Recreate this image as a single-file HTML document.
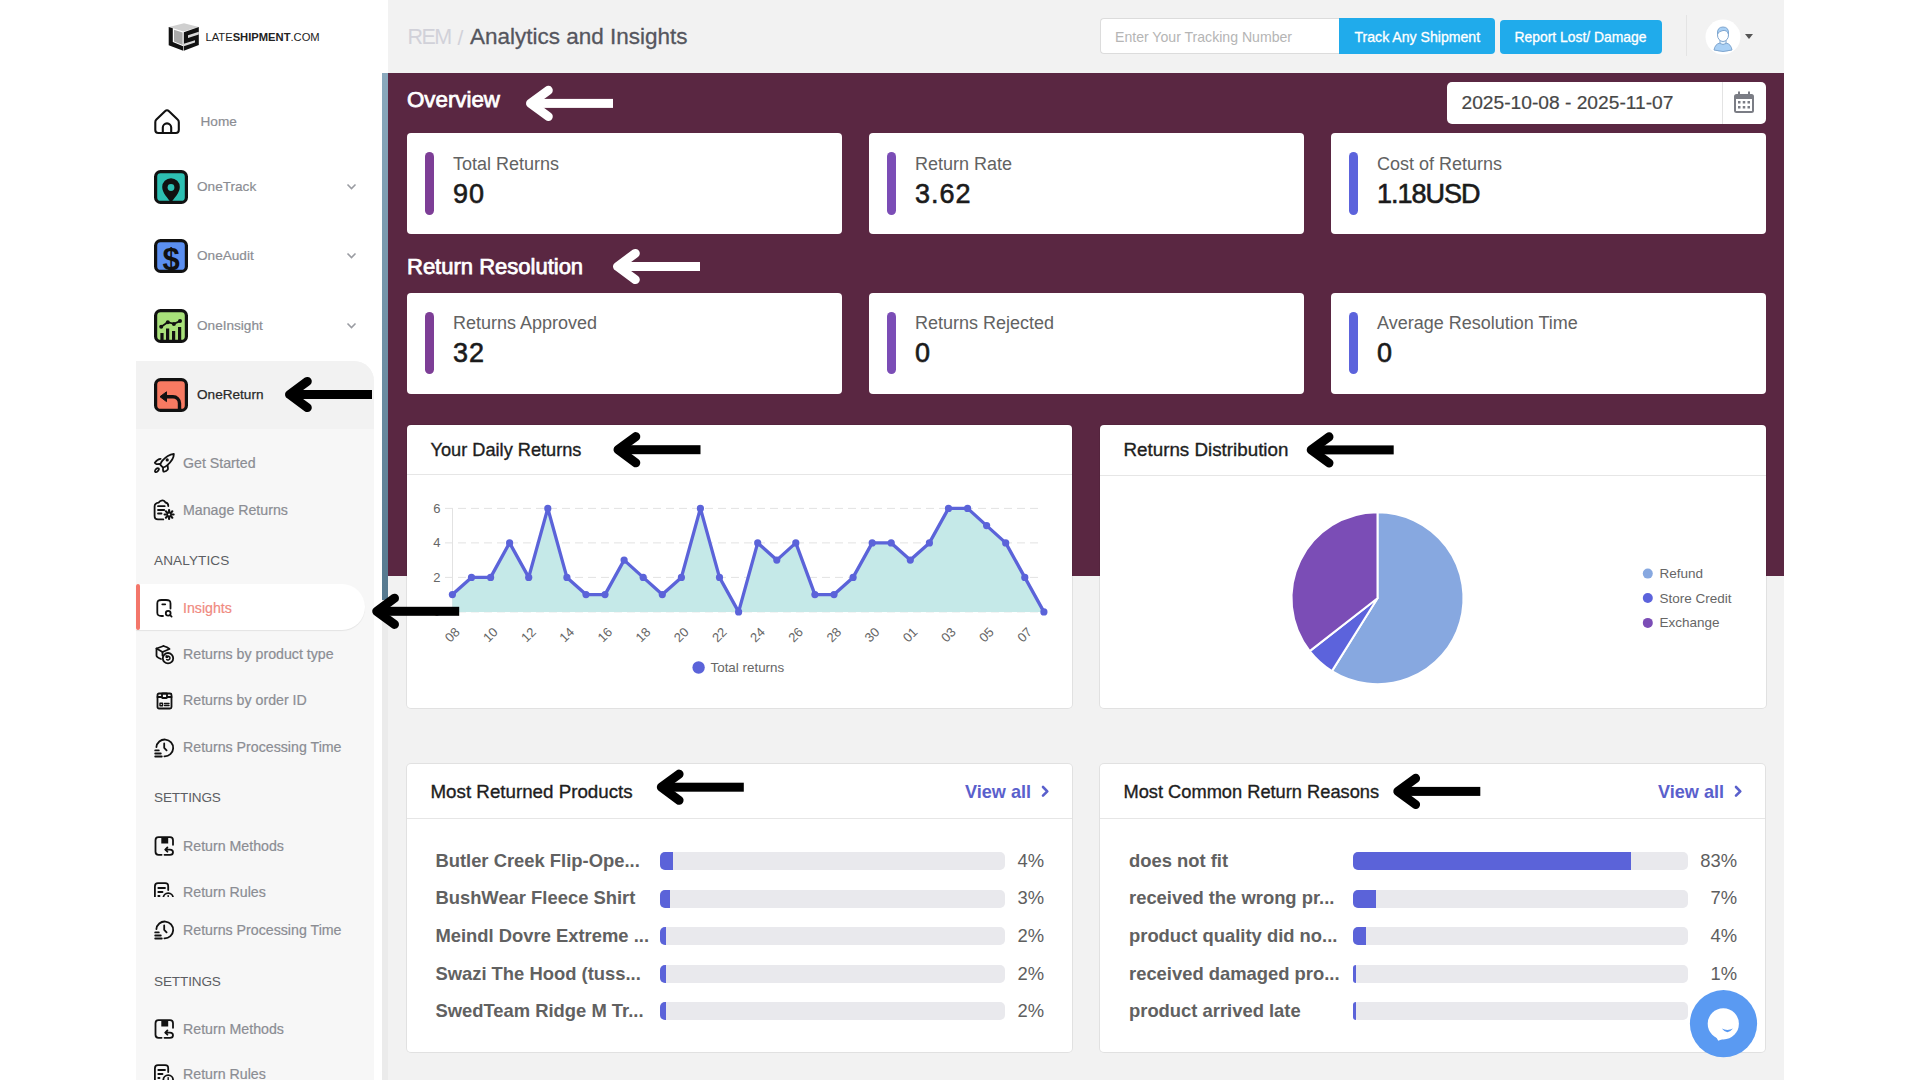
<!DOCTYPE html>
<html><head><meta charset="utf-8"><title>Analytics and Insights</title>
<style>
html,body{margin:0;padding:0;width:1920px;height:1080px;overflow:hidden;background:#fff;}
body{position:relative;font-family:"Liberation Sans",sans-serif;}
.r{position:absolute;}
.t{position:absolute;white-space:nowrap;line-height:1;}
svg text{font-family:"Liberation Sans",sans-serif;}
</style></head><body>
<div class="r" style="left:0px;top:0px;width:1920px;height:1080px;background:#ffffff;"></div><div class="r" style="left:388px;top:0px;width:1396px;height:73px;background:#f2f2f2;"></div><div class="r" style="left:388px;top:73px;width:1396px;height:503px;background:#5a2742;"></div><div class="r" style="left:388px;top:576px;width:1396px;height:504px;background:#f2f2f2;"></div><div class="r" style="left:382px;top:73px;width:6px;height:527px;background:linear-gradient(#8aa9bd,#56798f);"></div><div class="r" style="left:382px;top:600px;width:6px;height:480px;background:#ebebeb;"></div><div class="r" style="left:136px;top:361px;width:238px;height:719px;background:#f7f7f7;border-top-right-radius:20px;"></div><div class="r" style="left:136px;top:361px;width:238px;height:68px;background:#f2f2f2;border-top-right-radius:20px;"></div><svg class="r" style="left:164px;top:19px" width="40" height="36" viewBox="0 0 40 36">
<polygon points="5,8 20,4.2 34.8,8 19.4,12.6" fill="#cfcfcf"/>
<polygon points="4.7,8 8.8,9.3 8.8,23 19.2,27.2 19.2,31.8 4.7,26.2" fill="#111"/>
<polygon points="10,10.8 18.6,13.4 18.6,26 10,22.6" fill="#a9a9a9"/>
<polygon points="19.8,13.2 34.8,8 34.8,26 19.8,31.8" fill="#111"/>
<polygon points="24,16.2 34.8,12.8 34.8,15.6 24,19" fill="#d9d9d9"/>
<polygon points="19.8,24.8 31,21.2 31,23.6 19.8,27.2" fill="#d9d9d9"/>
</svg><div class="t" style="left:205.5px;top:32.02px;font-size:11.2px;color:#222;font-weight:400;letter-spacing:0px;">LATE<b>SHIPMENT</b>.COM</div><svg class="r" style="left:153px;top:108px" width="28" height="28" viewBox="0 0 28 28">
<path d="M2.3,14.2 Q2.3,12.7 3.4,11.6 L12,3.2 Q14,1.3 16,3.2 L24.6,11.6 Q25.8,12.7 25.8,14.2 V22 Q25.8,25 22.8,25 H5.3 Q2.3,25 2.3,22 Z" fill="none" stroke="#111" stroke-width="2.1" stroke-linejoin="round"/>
<path d="M9.8,25 V19.6 A4.2,4.2 0 0 1 18.2,19.6 V25" fill="none" stroke="#111" stroke-width="2.1"/>
</svg><div class="t" style="left:200.5px;top:115.49px;font-size:13.6px;color:#8b8d93;font-weight:400;-webkit-text-stroke:0.2px #8b8d93;">Home</div><svg class="r" style="left:154px;top:170px" width="34" height="34" viewBox="0 0 34 34"><rect x="1.6" y="1.6" width="30.8" height="30.8" rx="5" fill="#2dbfb2" stroke="#111" stroke-width="3.2"/><path d="M17,33 C14,28 8.2,23 8.2,17 A8.8,8.8 0 0 1 25.8,17 C25.8,23 20,28 17,33 Z" fill="#111"/><circle cx="17" cy="17.5" r="3.4" fill="#2dbfb2"/></svg><div class="t" style="left:197px;top:180.49px;font-size:13.6px;color:#8b8d93;font-weight:400;-webkit-text-stroke:0.2px #8b8d93;">OneTrack</div><svg class="r" style="left:154px;top:239px" width="34" height="34" viewBox="0 0 34 34"><rect x="1.6" y="1.6" width="30.8" height="30.8" rx="5" fill="#5b8ff0" stroke="#111" stroke-width="3.2"/><text x="17" y="31" text-anchor="middle" font-family="Liberation Sans" font-weight="700" font-size="31" fill="#111">$</text></svg><div class="t" style="left:197px;top:249.49px;font-size:13.6px;color:#8b8d93;font-weight:400;-webkit-text-stroke:0.2px #8b8d93;">OneAudit</div><svg class="r" style="left:154px;top:309px" width="34" height="34" viewBox="0 0 34 34"><rect x="1.6" y="1.6" width="30.8" height="30.8" rx="5" fill="#a8e07a" stroke="#111" stroke-width="3.2"/><path d="M8,33 V24 M13.6,33 V19.5 M19.6,33 V22 M25.6,33 V18" stroke="#111" stroke-width="3.2"/><path d="M7.2,17.7 L13.8,13.2 L19.9,14.9 L26,12.1" fill="none" stroke="#111" stroke-width="1.8"/><circle cx="7.2" cy="17.7" r="2" fill="#111"/><circle cx="13.8" cy="13.2" r="2" fill="#111"/><circle cx="19.9" cy="14.9" r="2" fill="#111"/><circle cx="26" cy="12.1" r="2" fill="#111"/></svg><div class="t" style="left:197px;top:319.49px;font-size:13.6px;color:#8b8d93;font-weight:400;-webkit-text-stroke:0.2px #8b8d93;">OneInsight</div><svg class="r" style="left:154px;top:378px" width="34" height="34" viewBox="0 0 34 34"><rect x="1.6" y="1.6" width="30.8" height="30.8" rx="5" fill="#f77a62" stroke="#111" stroke-width="3.2"/><path d="M11,18.7 H19 A6.5,6.5 0 0 1 25.5,25.2 V33" fill="none" stroke="#111" stroke-width="3.4"/><path d="M6,18.7 L12.5,13.8 L12.5,23.6 Z" fill="#111" stroke="#111" stroke-width="1" stroke-linejoin="round"/></svg><div class="t" style="left:197px;top:388.49px;font-size:13.6px;color:#2a2a2a;font-weight:400;-webkit-text-stroke:0.25px #2a2a2a;">OneReturn</div><svg class="r" style="left:346px;top:183px" width="11" height="8" viewBox="0 0 11 8"><path d="M1.5,1.5 L5.5,5.5 L9.5,1.5" fill="none" stroke="#9a9ca2" stroke-width="1.6"/></svg><svg class="r" style="left:346px;top:252px" width="11" height="8" viewBox="0 0 11 8"><path d="M1.5,1.5 L5.5,5.5 L9.5,1.5" fill="none" stroke="#9a9ca2" stroke-width="1.6"/></svg><svg class="r" style="left:346px;top:322px" width="11" height="8" viewBox="0 0 11 8"><path d="M1.5,1.5 L5.5,5.5 L9.5,1.5" fill="none" stroke="#9a9ca2" stroke-width="1.6"/></svg><div class="r" style="left:136px;top:584px;width:229px;height:46px;background:#ffffff;border-radius:0 23px 23px 0;box-shadow:0 1px 1px rgba(0,0,0,0.08);"></div><div class="r" style="left:136px;top:584px;width:4px;height:46px;background:#f3766a;border-radius:2px;"></div><svg class="r" style="left:153px;top:452.2px" width="22" height="22" viewBox="0 0 22 22" fill="none" stroke="#111" stroke-width="1.8" stroke-linecap="round" stroke-linejoin="round"><path d="M20.8,1.8 C17,2.2 13,4.4 9.2,8.9 C7.8,10.6 7.2,12 7.6,13.2 L9.6,15.2 C10.8,15.6 12.5,14.8 14.4,13.1 C18.8,9.2 21,5 20.8,1.8 Z"/><circle cx="14.2" cy="7.9" r="1.6" fill="#111" stroke="none"/><path d="M7.6,6.9 C5.3,7 3.2,8.8 1.8,10.8 C1.9,12.2 4.8,12.3 6.6,12"/><path d="M14.6,13.6 C14.7,15 15.3,16.7 14.8,17.6 C13.8,19 12,19.9 10.4,19.6 C9.8,18.4 9.9,17 10.1,15.8"/><ellipse cx="3.9" cy="18.1" rx="1.3" ry="2.4" transform="rotate(45 3.9 18.1)"/></svg><div class="t" style="left:183px;top:455.88px;font-size:14.2px;color:#8b8d93;font-weight:400;-webkit-text-stroke:0.2px #8b8d93;">Get Started</div><svg class="r" style="left:153px;top:498.7px" width="22" height="22" viewBox="0 0 22 22" fill="none" stroke="#111" stroke-width="1.8" stroke-linecap="round" stroke-linejoin="round"><path d="M15.3,7 C15.3,4.5 14,3.8 12.5,3.5 C11.5,1.5 9.5,1 7.5,2 C6.5,2.5 6,3.2 5.8,3.6 C3.2,3.8 1.6,5 1.6,7.5 V17 C1.6,19.3 3,20.4 5,20.4 H10.3"/><path d="M5,7.2 H11.7 M5,11 H11.2 M5,14.5 H8.5"/><circle cx="16.1" cy="15.5" r="2"/><path d="M16.1,11 V12.2 M16.1,18.8 V20 M11.6,15.5 H12.8 M19.4,15.5 H20.6 M12.9,12.3 L13.8,13.2 M18.4,17.8 L19.3,18.7 M12.9,18.7 L13.8,17.8 M18.4,13.2 L19.3,12.3" stroke-width="2.2"/></svg><div class="t" style="left:183px;top:502.58px;font-size:14.2px;color:#8b8d93;font-weight:400;-webkit-text-stroke:0.2px #8b8d93;">Manage Returns</div><svg class="r" style="left:153px;top:596.7px" width="22" height="22" viewBox="0 0 22 22" fill="none" stroke="#111" stroke-width="1.8" stroke-linecap="round" stroke-linejoin="round"><path d="M17.5,11.5 V6.5 C17.5,3.8 16.5,3 13,3 H8.5 C5.2,3 4.3,3.8 4.3,6.5 V15.5 C4.3,18.2 5.2,19 8.5,19 H10"/><path d="M9.3,7.3 H12.2"/><circle cx="15.2" cy="16.3" r="2.4"/><path d="M17.1,18.2 L18.6,19.6"/></svg><div class="t" style="left:183px;top:600.68px;font-size:14.2px;color:#f08a80;font-weight:400;-webkit-text-stroke:0.2px #f08a80;">Insights</div><svg class="r" style="left:153px;top:643.3px" width="22" height="22" viewBox="0 0 22 22" fill="none" stroke="#111" stroke-width="1.8" stroke-linecap="round" stroke-linejoin="round"><path d="M10.5,3 L3.5,5.5 V12.5 C3.5,13.5 5.5,15 8,16"/><path d="M3.5,5.5 L9.5,9 L16.5,6 C15,4.5 12.5,3.5 10.5,3"/><path d="M9.5,9 V12.5"/><circle cx="15" cy="15.2" r="5.2"/><path d="M13.2,13.8 C14.5,12.5 17,13 17,15 C17,17 14.5,17.5 13.7,16.5 M13.2,12.8 V14.2 H14.6" stroke-width="1.5"/></svg><div class="t" style="left:183px;top:647.18px;font-size:14.2px;color:#8b8d93;font-weight:400;-webkit-text-stroke:0.2px #8b8d93;">Returns by product type</div><svg class="r" style="left:153px;top:690.1px" width="22" height="22" viewBox="0 0 22 22" fill="none" stroke="#111" stroke-width="1.8" stroke-linecap="round" stroke-linejoin="round"><rect x="4.5" y="3.5" width="14" height="15" rx="1.5"/><path d="M4.5,7 H8.5 M14.5,7 H18.5"/><rect x="9" y="3.5" width="5" height="4.5" rx="0.5"/><rect x="7" y="13.2" width="2.5" height="2.5" stroke-width="1.4"/><path d="M11.5,13.5 H16 M11.5,15.5 H16" stroke-width="1.4"/></svg><div class="t" style="left:183px;top:692.78px;font-size:14.2px;color:#8b8d93;font-weight:400;-webkit-text-stroke:0.2px #8b8d93;">Returns by order ID</div><svg class="r" style="left:153px;top:736.8px" width="22" height="22" viewBox="0 0 22 22" fill="none" stroke="#111" stroke-width="1.8" stroke-linecap="round" stroke-linejoin="round"><path d="M3.4,10.2 A8.4,8.4 0 1 1 11.4,19.3"/><path d="M11.2,6.4 V10.8 L13.6,13.3"/><path d="M2.2,13.4 H5.8 M2.2,16.5 H7.8 M2.2,19.5 H8.8" stroke-width="1.8"/></svg><div class="t" style="left:183px;top:740.48px;font-size:14.2px;color:#8b8d93;font-weight:400;-webkit-text-stroke:0.2px #8b8d93;">Returns Processing Time</div><svg class="r" style="left:153px;top:834.7px" width="22" height="22" viewBox="0 0 22 22" fill="none" stroke="#111" stroke-width="1.8" stroke-linecap="round" stroke-linejoin="round"><path d="M8.6,19.8 H5.5 C3.3,19.8 2.5,19 2.5,16.8 V5.2 C2.5,3 3.3,2.2 5.5,2.2 H17 C19.2,2.2 20,3 20,5.2 V9.8"/><rect x="8.3" y="2.2" width="6.9" height="6.3" fill="#111" stroke="none"/><path d="M12.6,14.6 H17 C19,14.6 20,15.6 20,17.2 C20,18.8 19,19.8 17,19.8 H11.5"/><path d="M14.4,12.5 L12.3,14.6 L14.4,16.7"/></svg><div class="t" style="left:183px;top:838.78px;font-size:14.2px;color:#8b8d93;font-weight:400;-webkit-text-stroke:0.2px #8b8d93;">Return Methods</div><div class="r" style="left:150px;top:877.5px;width:30px;height:19.5px;overflow:hidden"><svg class="r" style="left:3px;top:3px" width="22" height="22" viewBox="0 0 22 22" fill="none" stroke="#111" stroke-width="1.8" stroke-linecap="round" stroke-linejoin="round"><path d="M15.2,9 V5.4 C15.2,3.2 14.4,2.2 12.2,2.2 H5 C2.8,2.2 1.9,3.2 1.9,5.4 V19.5"/><path d="M5.3,7 H12 M5.3,11 H9.5 M5.3,15 H6.5"/><path d="M10.3,17 A4.9,4.9 0 0 1 20.1,17"/><path d="M15.2,17.5 V14.6" stroke-width="1.4"/></svg></div><div class="t" style="left:183px;top:885.08px;font-size:14.2px;color:#8b8d93;font-weight:400;-webkit-text-stroke:0.2px #8b8d93;">Return Rules</div><svg class="r" style="left:153px;top:919.0px" width="22" height="22" viewBox="0 0 22 22" fill="none" stroke="#111" stroke-width="1.8" stroke-linecap="round" stroke-linejoin="round"><path d="M3.4,10.2 A8.4,8.4 0 1 1 11.4,19.3"/><path d="M11.2,6.4 V10.8 L13.6,13.3"/><path d="M2.2,13.4 H5.8 M2.2,16.5 H7.8 M2.2,19.5 H8.8" stroke-width="1.8"/></svg><div class="t" style="left:183px;top:923.28px;font-size:14.2px;color:#8b8d93;font-weight:400;-webkit-text-stroke:0.2px #8b8d93;">Returns Processing Time</div><svg class="r" style="left:153px;top:1017.7px" width="22" height="22" viewBox="0 0 22 22" fill="none" stroke="#111" stroke-width="1.8" stroke-linecap="round" stroke-linejoin="round"><path d="M8.6,19.8 H5.5 C3.3,19.8 2.5,19 2.5,16.8 V5.2 C2.5,3 3.3,2.2 5.5,2.2 H17 C19.2,2.2 20,3 20,5.2 V9.8"/><rect x="8.3" y="2.2" width="6.9" height="6.3" fill="#111" stroke="none"/><path d="M12.6,14.6 H17 C19,14.6 20,15.6 20,17.2 C20,18.8 19,19.8 17,19.8 H11.5"/><path d="M14.4,12.5 L12.3,14.6 L14.4,16.7"/></svg><div class="t" style="left:183px;top:1021.68px;font-size:14.2px;color:#8b8d93;font-weight:400;-webkit-text-stroke:0.2px #8b8d93;">Return Methods</div><svg class="r" style="left:153px;top:1063.0px" width="22" height="22" viewBox="0 0 22 22" fill="none" stroke="#111" stroke-width="1.8" stroke-linecap="round" stroke-linejoin="round"><path d="M15.2,9 V5.4 C15.2,3.2 14.4,2.2 12.2,2.2 H5 C2.8,2.2 1.9,3.2 1.9,5.4 V19.5"/><path d="M5.3,7 H12 M5.3,11 H9.5 M5.3,15 H6.5"/><path d="M10.3,17 A4.9,4.9 0 0 1 20.1,17"/><path d="M15.2,17.5 V14.6" stroke-width="1.4"/></svg><div class="t" style="left:183px;top:1066.78px;font-size:14.2px;color:#8b8d93;font-weight:400;-webkit-text-stroke:0.2px #8b8d93;">Return Rules</div><div class="t" style="left:154px;top:553.59px;font-size:13.6px;color:#5c5e63;font-weight:400;letter-spacing:0.1px;">ANALYTICS</div><div class="t" style="left:154px;top:791.49px;font-size:13.6px;color:#5c5e63;font-weight:400;letter-spacing:-0.15px;">SETTINGS</div><div class="t" style="left:154px;top:974.79px;font-size:13.6px;color:#5c5e63;font-weight:400;letter-spacing:-0.15px;">SETTINGS</div><div class="t" style="left:407.5px;top:26.50px;font-size:21.5px;color:#d1d1d9;font-weight:400;letter-spacing:-1.6px;">REM</div><div class="t" style="left:457.5px;top:26.92px;font-size:21px;color:#d1d1d9;font-weight:400;">/</div><div class="t" style="left:470px;top:25.65px;font-size:22.5px;color:#55565e;font-weight:400;-webkit-text-stroke:0.3px #55565e;">Analytics and Insights</div><div class="r" style="left:1100px;top:18px;width:240px;height:36px;background:#ffffff;border:1px solid #dcdcdc;border-right:none;border-radius:4px 0 0 4px;box-sizing:border-box;"></div><div class="t" style="left:1115px;top:29.86px;font-size:14.1px;color:#b5b5b5;font-weight:400;">Enter Your Tracking Number</div><div class="r" style="left:1339px;top:18px;width:156px;height:36px;background:#20abeb;border-radius:0 4px 4px 0;"></div><div class="t" style="left:1354.5px;top:29.96px;font-size:14.1px;color:#ffffff;font-weight:400;-webkit-text-stroke:0.3px #fff;">Track Any Shipment</div><div class="r" style="left:1500px;top:19.5px;width:162px;height:34.5px;background:#20abeb;border-radius:4px;"></div><div class="t" style="left:1514.5px;top:31.23px;font-size:13.9px;color:#ffffff;font-weight:400;-webkit-text-stroke:0.3px #fff;">Report Lost/ Damage</div><div class="r" style="left:1686px;top:15px;width:1px;height:41px;background:#e4e4e4;"></div><svg class="r" style="left:1705px;top:19px" width="36" height="36" viewBox="0 0 36 36">
<circle cx="18" cy="18" r="17.5" fill="#ffffff"/>
<path d="M9,31 Q10,25 15,24 L21,24 Q26,25 27,31 Q18,34 9,31 Z" fill="#a9d0f5" stroke="#7fa6cf" stroke-width="1"/>
<path d="M15,21 V24.5 Q18,26.5 21,24.5 V21" fill="#e9f4fd" stroke="#7fa6cf" stroke-width="1"/>
<ellipse cx="18" cy="16" rx="5.5" ry="6.5" fill="#ffffff" stroke="#7fa6cf" stroke-width="1"/>
<path d="M12.5,15 Q12,8 18,8 Q24,8 23.5,15 Q22,11 18,11.5 Q14,12 12.5,15 Z" fill="#a9d0f5" stroke="#7fa6cf" stroke-width="1"/>
</svg><svg class="r" style="left:1745px;top:34px" width="8" height="5" viewBox="0 0 8 5"><path d="M0,0 H8 L4,5 Z" fill="#555"/></svg><div class="t" style="left:407px;top:89.22px;font-size:22.3px;color:#ffffff;font-weight:400;-webkit-text-stroke:0.75px #fff;">Overview</div><div class="r" style="left:1447px;top:82px;width:319px;height:42px;background:#ffffff;border-radius:5px;"></div><div class="r" style="left:1722px;top:82px;width:1px;height:42px;background:#e3e3e3;"></div><div class="t" style="left:1461.5px;top:93.35px;font-size:19.2px;color:#474747;font-weight:400;-webkit-text-stroke:0.2px #474747;">2025-10-08 - 2025-11-07</div><svg class="r" style="left:1733px;top:91px" width="22" height="23" viewBox="0 0 22 23">
<rect x="1" y="3" width="20" height="19" rx="2.5" fill="#7b7d85"/>
<rect x="3" y="8" width="16" height="12" fill="#ffffff"/>
<rect x="5" y="0.5" width="2" height="4" fill="#7b7d85"/><rect x="15" y="0.5" width="2" height="4" fill="#7b7d85"/>
<g fill="#7b7d85"><rect x="5" y="10" width="2.5" height="2.5"/><rect x="9.75" y="10" width="2.5" height="2.5"/><rect x="14.5" y="10" width="2.5" height="2.5"/>
<rect x="5" y="15" width="2.5" height="2.5"/><rect x="9.75" y="15" width="2.5" height="2.5"/><rect x="14.5" y="15" width="2.5" height="2.5"/></g>
</svg><div class="r" style="left:407px;top:133px;width:435px;height:101px;background:#ffffff;border-radius:4px;"></div><div class="r" style="left:425.2px;top:152.3px;width:9px;height:62.5px;background:#7d3e96;border-radius:5px;"></div><div class="t" style="left:453px;top:154.56px;font-size:18px;color:#626262;font-weight:400;">Total Returns</div><div class="t" style="left:453px;top:180.64px;font-size:27px;color:#1b1b1b;font-weight:400;letter-spacing:1px;-webkit-text-stroke:0.6px #1b1b1b;">90</div><div class="r" style="left:869px;top:133px;width:435px;height:101px;background:#ffffff;border-radius:4px;"></div><div class="r" style="left:887.2px;top:152.3px;width:9px;height:62.5px;background:#7b4db6;border-radius:5px;"></div><div class="t" style="left:915px;top:154.56px;font-size:18px;color:#626262;font-weight:400;">Return Rate</div><div class="t" style="left:915px;top:180.64px;font-size:27px;color:#1b1b1b;font-weight:400;letter-spacing:1px;-webkit-text-stroke:0.6px #1b1b1b;">3.62</div><div class="r" style="left:1331px;top:133px;width:435px;height:101px;background:#ffffff;border-radius:4px;"></div><div class="r" style="left:1349.2px;top:152.3px;width:9px;height:62.5px;background:#5c63dc;border-radius:5px;"></div><div class="t" style="left:1377px;top:154.56px;font-size:18px;color:#626262;font-weight:400;">Cost of Returns</div><div class="t" style="left:1377px;top:180.64px;font-size:27px;color:#1b1b1b;font-weight:400;letter-spacing:1px;-webkit-text-stroke:0.6px #1b1b1b;"><span style='letter-spacing:-1px'>1.18USD</span></div><div class="t" style="left:407px;top:255.68px;font-size:22.0px;color:#ffffff;font-weight:400;-webkit-text-stroke:0.75px #fff;">Return Resolution</div><div class="r" style="left:407px;top:292.5px;width:435px;height:101px;background:#ffffff;border-radius:4px;"></div><div class="r" style="left:425.2px;top:311.8px;width:9px;height:62.5px;background:#7d3e96;border-radius:5px;"></div><div class="t" style="left:453px;top:314.06px;font-size:18px;color:#626262;font-weight:400;">Returns Approved</div><div class="t" style="left:453px;top:340.14px;font-size:27px;color:#1b1b1b;font-weight:400;letter-spacing:1px;-webkit-text-stroke:0.6px #1b1b1b;">32</div><div class="r" style="left:869px;top:292.5px;width:435px;height:101px;background:#ffffff;border-radius:4px;"></div><div class="r" style="left:887.2px;top:311.8px;width:9px;height:62.5px;background:#7b4db6;border-radius:5px;"></div><div class="t" style="left:915px;top:314.06px;font-size:18px;color:#626262;font-weight:400;">Returns Rejected</div><div class="t" style="left:915px;top:340.14px;font-size:27px;color:#1b1b1b;font-weight:400;letter-spacing:1px;-webkit-text-stroke:0.6px #1b1b1b;">0</div><div class="r" style="left:1331px;top:292.5px;width:435px;height:101px;background:#ffffff;border-radius:4px;"></div><div class="r" style="left:1349.2px;top:311.8px;width:9px;height:62.5px;background:#5c63dc;border-radius:5px;"></div><div class="t" style="left:1377px;top:314.06px;font-size:18px;color:#626262;font-weight:400;">Average Resolution Time</div><div class="t" style="left:1377px;top:340.14px;font-size:27px;color:#1b1b1b;font-weight:400;letter-spacing:1px;-webkit-text-stroke:0.6px #1b1b1b;">0</div><div class="r" style="left:407px;top:425px;width:665px;height:283px;background:#ffffff;border-radius:4px;box-shadow:0 0 0 1px rgba(0,0,0,0.065);"></div><div class="r" style="left:407px;top:474px;width:665px;height:1px;background:#e6e6e6;"></div><div class="t" style="left:430.5px;top:441.09px;font-size:18.2px;color:#1e1e1e;font-weight:400;-webkit-text-stroke:0.35px #1e1e1e;">Your Daily Returns</div><div class="r" style="left:1100px;top:425px;width:665.5px;height:283px;background:#ffffff;border-radius:4px;box-shadow:0 0 0 1px rgba(0,0,0,0.065);"></div><div class="r" style="left:1100px;top:474.5px;width:665.5px;height:1px;background:#e6e6e6;"></div><div class="t" style="left:1123.5px;top:440.59px;font-size:18.8px;color:#1e1e1e;font-weight:400;-webkit-text-stroke:0.35px #1e1e1e;">Returns Distribution</div><div class="r" style="left:407px;top:763.5px;width:665px;height:288.5px;background:#ffffff;border-radius:4px;box-shadow:0 0 0 1px rgba(0,0,0,0.065);"></div><div class="r" style="left:407px;top:818px;width:665px;height:1px;background:#e6e6e6;"></div><div class="t" style="left:430.5px;top:782.63px;font-size:18.75px;color:#1e1e1e;font-weight:400;-webkit-text-stroke:0.35px #1e1e1e;">Most Returned Products</div><div class="r" style="left:1100px;top:763.5px;width:665px;height:288.5px;background:#ffffff;border-radius:4px;box-shadow:0 0 0 1px rgba(0,0,0,0.065);"></div><div class="r" style="left:1100px;top:818px;width:665px;height:1px;background:#e6e6e6;"></div><div class="t" style="left:1123.5px;top:783.05px;font-size:18.25px;color:#1e1e1e;font-weight:400;-webkit-text-stroke:0.35px #1e1e1e;">Most Common Return Reasons</div><svg class="r" style="left:0;top:0" width="1920" height="1080" viewBox="0 0 1920 1080">
<g><line x1="445" y1="508.4" x2="1043" y2="508.4" stroke="#e2e2e2" stroke-width="1" stroke-dasharray="8,5"/><line x1="445" y1="542.9" x2="1043" y2="542.9" stroke="#e2e2e2" stroke-width="1" stroke-dasharray="8,5"/><line x1="445" y1="577.4" x2="1043" y2="577.4" stroke="#e2e2e2" stroke-width="1" stroke-dasharray="8,5"/><line x1="445" y1="611.9" x2="1043" y2="611.9" stroke="#e2e2e2" stroke-width="1" stroke-dasharray="8,5"/></g>
<line x1="452.5" y1="508.4" x2="452.5" y2="611.9" stroke="#e2e2e2" stroke-width="1"/>
<path d="M452.4,611.9 L452.4,594.6 L471.5,577.4 L490.6,577.4 L509.6,542.9 L528.7,577.4 L547.8,508.4 L566.9,577.4 L586.0,594.6 L605.0,594.6 L624.1,560.1 L643.2,577.4 L662.3,594.6 L681.4,577.4 L700.4,508.4 L719.5,577.4 L738.6,611.9 L757.7,542.9 L776.8,560.1 L795.8,542.9 L814.9,594.6 L834.0,594.6 L853.1,577.4 L872.2,542.9 L891.2,542.9 L910.3,560.1 L929.4,542.9 L948.5,508.4 L967.6,508.4 L986.6,525.6 L1005.7,542.9 L1024.8,577.4 L1043.9,611.9 L1043.9,611.9 Z" fill="#c5e9e8"/>
<polyline points="452.4,594.6 471.5,577.4 490.6,577.4 509.6,542.9 528.7,577.4 547.8,508.4 566.9,577.4 586.0,594.6 605.0,594.6 624.1,560.1 643.2,577.4 662.3,594.6 681.4,577.4 700.4,508.4 719.5,577.4 738.6,611.9 757.7,542.9 776.8,560.1 795.8,542.9 814.9,594.6 834.0,594.6 853.1,577.4 872.2,542.9 891.2,542.9 910.3,560.1 929.4,542.9 948.5,508.4 967.6,508.4 986.6,525.6 1005.7,542.9 1024.8,577.4 1043.9,611.9" fill="none" stroke="#5b63d9" stroke-width="3.3" stroke-linejoin="round"/>
<g fill="#5b63d9"><circle cx="452.4" cy="594.6" r="3.6"/><circle cx="471.5" cy="577.4" r="3.6"/><circle cx="490.6" cy="577.4" r="3.6"/><circle cx="509.6" cy="542.9" r="3.6"/><circle cx="528.7" cy="577.4" r="3.6"/><circle cx="547.8" cy="508.4" r="3.6"/><circle cx="566.9" cy="577.4" r="3.6"/><circle cx="586.0" cy="594.6" r="3.6"/><circle cx="605.0" cy="594.6" r="3.6"/><circle cx="624.1" cy="560.1" r="3.6"/><circle cx="643.2" cy="577.4" r="3.6"/><circle cx="662.3" cy="594.6" r="3.6"/><circle cx="681.4" cy="577.4" r="3.6"/><circle cx="700.4" cy="508.4" r="3.6"/><circle cx="719.5" cy="577.4" r="3.6"/><circle cx="738.6" cy="611.9" r="3.6"/><circle cx="757.7" cy="542.9" r="3.6"/><circle cx="776.8" cy="560.1" r="3.6"/><circle cx="795.8" cy="542.9" r="3.6"/><circle cx="814.9" cy="594.6" r="3.6"/><circle cx="834.0" cy="594.6" r="3.6"/><circle cx="853.1" cy="577.4" r="3.6"/><circle cx="872.2" cy="542.9" r="3.6"/><circle cx="891.2" cy="542.9" r="3.6"/><circle cx="910.3" cy="560.1" r="3.6"/><circle cx="929.4" cy="542.9" r="3.6"/><circle cx="948.5" cy="508.4" r="3.6"/><circle cx="967.6" cy="508.4" r="3.6"/><circle cx="986.6" cy="525.6" r="3.6"/><circle cx="1005.7" cy="542.9" r="3.6"/><circle cx="1024.8" cy="577.4" r="3.6"/><circle cx="1043.9" cy="611.9" r="3.6"/></g>
<g font-family="Liberation Sans" font-size="13" fill="#666"><text x="440.5" y="512.9" text-anchor="end">6</text><text x="440.5" y="547.4" text-anchor="end">4</text><text x="440.5" y="581.9" text-anchor="end">2</text><text x="440.5" y="616.4" text-anchor="end">0</text><text transform="translate(455.4,638) rotate(-45)" text-anchor="middle">08</text><text transform="translate(493.6,638) rotate(-45)" text-anchor="middle">10</text><text transform="translate(531.7,638) rotate(-45)" text-anchor="middle">12</text><text transform="translate(569.9,638) rotate(-45)" text-anchor="middle">14</text><text transform="translate(608.0,638) rotate(-45)" text-anchor="middle">16</text><text transform="translate(646.2,638) rotate(-45)" text-anchor="middle">18</text><text transform="translate(684.4,638) rotate(-45)" text-anchor="middle">20</text><text transform="translate(722.5,638) rotate(-45)" text-anchor="middle">22</text><text transform="translate(760.7,638) rotate(-45)" text-anchor="middle">24</text><text transform="translate(798.8,638) rotate(-45)" text-anchor="middle">26</text><text transform="translate(837.0,638) rotate(-45)" text-anchor="middle">28</text><text transform="translate(875.2,638) rotate(-45)" text-anchor="middle">30</text><text transform="translate(913.3,638) rotate(-45)" text-anchor="middle">01</text><text transform="translate(951.5,638) rotate(-45)" text-anchor="middle">03</text><text transform="translate(989.6,638) rotate(-45)" text-anchor="middle">05</text><text transform="translate(1027.8,638) rotate(-45)" text-anchor="middle">07</text></g>
<circle cx="698.6" cy="667.5" r="6.2" fill="#5b63d9"/>
<g stroke="#fff" stroke-width="2" stroke-linejoin="round"><path d="M1377.5,598.2 L1377.50,512.20 A86,86 0 1 1 1331.93,671.13 Z" fill="#87a8e0"/><path d="M1377.5,598.2 L1331.93,671.13 A86,86 0 0 1 1309.73,651.15 Z" fill="#5c63dc"/><path d="M1377.5,598.2 L1309.73,651.15 A86,86 0 0 1 1377.50,512.20 Z" fill="#7b4db6"/></g>
<g fill="#87a8e0"><circle cx="1647.8" cy="573.6" r="5"/></g>
<circle cx="1647.8" cy="598" r="5" fill="#5c63dc"/>
<circle cx="1647.8" cy="622.9" r="5" fill="#7b4db6"/>
</svg><div class="t" style="left:710.5px;top:660.66px;font-size:13.4px;color:#666;font-weight:400;">Total returns</div><div class="t" style="left:1659.5px;top:566.87px;font-size:13.5px;color:#666;font-weight:400;">Refund</div><div class="t" style="left:1659.5px;top:591.57px;font-size:13.5px;color:#666;font-weight:400;">Store Credit</div><div class="t" style="left:1659.5px;top:616.07px;font-size:13.5px;color:#666;font-weight:400;">Exchange</div><div class="t" style="left:965px;top:783.18px;font-size:18.1px;color:#5a60cc;font-weight:700;">View all</div><svg class="r" style="left:1040.5px;top:785px" width="9" height="13" viewBox="0 0 9 13"><path d="M2,2 L6.3,6.3 L2,10.6" fill="none" stroke="#5a60cc" stroke-width="2.6" stroke-linecap="round" stroke-linejoin="round"/></svg><div class="t" style="left:435.4px;top:851.82px;font-size:18.4px;color:#616161;font-weight:700;">Butler Creek Flip-Ope...</div><div class="r" style="left:659.5px;top:851.9px;width:345.5px;height:18px;background:#e9e9ed;border-radius:5px;"></div><div class="r" style="left:659.5px;top:851.9px;width:13.82px;height:18px;background:#5b63d9;border-radius:5px 0 0 5px;"></div><div class="t" style="right:876px;top:851.82px;font-size:18.4px;color:#5e5e5e;font-weight:400;">4%</div><div class="t" style="left:435.4px;top:889.45px;font-size:18.4px;color:#616161;font-weight:700;">BushWear Fleece Shirt</div><div class="r" style="left:659.5px;top:889.53px;width:345.5px;height:18px;background:#e9e9ed;border-radius:5px;"></div><div class="r" style="left:659.5px;top:889.53px;width:10.365px;height:18px;background:#5b63d9;border-radius:5px 0 0 5px;"></div><div class="t" style="right:876px;top:889.45px;font-size:18.4px;color:#5e5e5e;font-weight:400;">3%</div><div class="t" style="left:435.4px;top:927.08px;font-size:18.4px;color:#616161;font-weight:700;">Meindl Dovre Extreme ...</div><div class="r" style="left:659.5px;top:927.16px;width:345.5px;height:18px;background:#e9e9ed;border-radius:5px;"></div><div class="r" style="left:659.5px;top:927.16px;width:6.91px;height:18px;background:#5b63d9;border-radius:5px 0 0 5px;"></div><div class="t" style="right:876px;top:927.08px;font-size:18.4px;color:#5e5e5e;font-weight:400;">2%</div><div class="t" style="left:435.4px;top:964.71px;font-size:18.4px;color:#616161;font-weight:700;">Swazi The Hood (tuss...</div><div class="r" style="left:659.5px;top:964.79px;width:345.5px;height:18px;background:#e9e9ed;border-radius:5px;"></div><div class="r" style="left:659.5px;top:964.79px;width:6.91px;height:18px;background:#5b63d9;border-radius:5px 0 0 5px;"></div><div class="t" style="right:876px;top:964.71px;font-size:18.4px;color:#5e5e5e;font-weight:400;">2%</div><div class="t" style="left:435.4px;top:1002.34px;font-size:18.4px;color:#616161;font-weight:700;">SwedTeam Ridge M Tr...</div><div class="r" style="left:659.5px;top:1002.42px;width:345.5px;height:18px;background:#e9e9ed;border-radius:5px;"></div><div class="r" style="left:659.5px;top:1002.42px;width:6.91px;height:18px;background:#5b63d9;border-radius:5px 0 0 5px;"></div><div class="t" style="right:876px;top:1002.34px;font-size:18.4px;color:#5e5e5e;font-weight:400;">2%</div><div class="t" style="left:1658px;top:783.18px;font-size:18.1px;color:#5a60cc;font-weight:700;">View all</div><svg class="r" style="left:1733.5px;top:785px" width="9" height="13" viewBox="0 0 9 13"><path d="M2,2 L6.3,6.3 L2,10.6" fill="none" stroke="#5a60cc" stroke-width="2.6" stroke-linecap="round" stroke-linejoin="round"/></svg><div class="t" style="left:1129px;top:851.82px;font-size:18.4px;color:#616161;font-weight:700;">does not fit</div><div class="r" style="left:1352.5px;top:851.9px;width:335.5px;height:18px;background:#e9e9ed;border-radius:5px;"></div><div class="r" style="left:1352.5px;top:851.9px;width:278.465px;height:18px;background:#5b63d9;border-radius:5px 0 0 5px;"></div><div class="t" style="right:183px;top:851.82px;font-size:18.4px;color:#5e5e5e;font-weight:400;">83%</div><div class="t" style="left:1129px;top:889.45px;font-size:18.4px;color:#616161;font-weight:700;">received the wrong pr...</div><div class="r" style="left:1352.5px;top:889.53px;width:335.5px;height:18px;background:#e9e9ed;border-radius:5px;"></div><div class="r" style="left:1352.5px;top:889.53px;width:23.485px;height:18px;background:#5b63d9;border-radius:5px 0 0 5px;"></div><div class="t" style="right:183px;top:889.45px;font-size:18.4px;color:#5e5e5e;font-weight:400;">7%</div><div class="t" style="left:1129px;top:927.08px;font-size:18.4px;color:#616161;font-weight:700;">product quality did no...</div><div class="r" style="left:1352.5px;top:927.16px;width:335.5px;height:18px;background:#e9e9ed;border-radius:5px;"></div><div class="r" style="left:1352.5px;top:927.16px;width:13.42px;height:18px;background:#5b63d9;border-radius:5px 0 0 5px;"></div><div class="t" style="right:183px;top:927.08px;font-size:18.4px;color:#5e5e5e;font-weight:400;">4%</div><div class="t" style="left:1129px;top:964.71px;font-size:18.4px;color:#616161;font-weight:700;">received damaged pro...</div><div class="r" style="left:1352.5px;top:964.79px;width:335.5px;height:18px;background:#e9e9ed;border-radius:5px;"></div><div class="r" style="left:1352.5px;top:964.79px;width:3.5px;height:18px;background:#5b63d9;border-radius:5px 0 0 5px;"></div><div class="t" style="right:183px;top:964.71px;font-size:18.4px;color:#5e5e5e;font-weight:400;">1%</div><div class="t" style="left:1129px;top:1002.34px;font-size:18.4px;color:#616161;font-weight:700;">product arrived late</div><div class="r" style="left:1352.5px;top:1002.42px;width:335.5px;height:18px;background:#e9e9ed;border-radius:5px;"></div><div class="r" style="left:1352.5px;top:1002.42px;width:3.5px;height:18px;background:#5b63d9;border-radius:5px 0 0 5px;"></div><div class="t" style="right:183px;top:1002.34px;font-size:18.4px;color:#5e5e5e;font-weight:400;">1%</div><svg class="r" style="left:1689px;top:989px" width="69" height="69" viewBox="0 0 69 69">
<circle cx="34.5" cy="34.7" r="33.6" fill="#5a9af2"/>
<circle cx="34.3" cy="34.8" r="15.6" fill="#fff"/>
<path d="M25,44 L29.2,51.8 L38,48.5 Z" fill="#fff"/>
<path d="M32.8,39.6 Q38.4,46.8 44,39.6 Q38.4,42.2 32.8,39.6 Z" fill="#5a9af2"/>
</svg><svg class="r" style="left:0;top:0" width="1920" height="1080" viewBox="0 0 1920 1080"><path d="M548.3,90.3 L530.5,103.4 L548.3,116.5" fill="none" stroke="#fff" stroke-width="9" stroke-linecap="round" stroke-linejoin="round"/><rect x="530.5" y="98.9" width="82.5" height="9" fill="#fff"/><path d="M635.3,253.4 L617.5,266.5 L635.3,279.6" fill="none" stroke="#fff" stroke-width="9" stroke-linecap="round" stroke-linejoin="round"/><rect x="617.5" y="262.0" width="82.5" height="9" fill="#fff"/><path d="M635.8,436.6 L618.0,449.7 L635.8,462.8" fill="none" stroke="#000" stroke-width="9" stroke-linecap="round" stroke-linejoin="round"/><rect x="618.0" y="445.2" width="82.5" height="9" fill="#000"/><path d="M1329.0,436.8 L1311.2,449.9 L1329.0,463.0" fill="none" stroke="#000" stroke-width="9" stroke-linecap="round" stroke-linejoin="round"/><rect x="1311.2" y="445.4" width="82.5" height="9" fill="#000"/><path d="M679.1,774.1 L661.3,787.2 L679.1,800.3" fill="none" stroke="#000" stroke-width="9" stroke-linecap="round" stroke-linejoin="round"/><rect x="661.3" y="782.7" width="82.5" height="9" fill="#000"/><path d="M1415.6,778.3 L1397.8,791.4 L1415.6,804.5" fill="none" stroke="#000" stroke-width="9" stroke-linecap="round" stroke-linejoin="round"/><rect x="1397.8" y="786.9" width="82.5" height="9" fill="#000"/><path d="M307.3,381.4 L289.5,394.5 L307.3,407.6" fill="none" stroke="#000" stroke-width="9" stroke-linecap="round" stroke-linejoin="round"/><rect x="289.5" y="390.0" width="82.5" height="9" fill="#000"/><path d="M394.5,598.2 L376.7,611.3 L394.5,624.4" fill="none" stroke="#000" stroke-width="9" stroke-linecap="round" stroke-linejoin="round"/><rect x="376.7" y="606.8" width="82.5" height="9" fill="#000"/></svg>
</body></html>
